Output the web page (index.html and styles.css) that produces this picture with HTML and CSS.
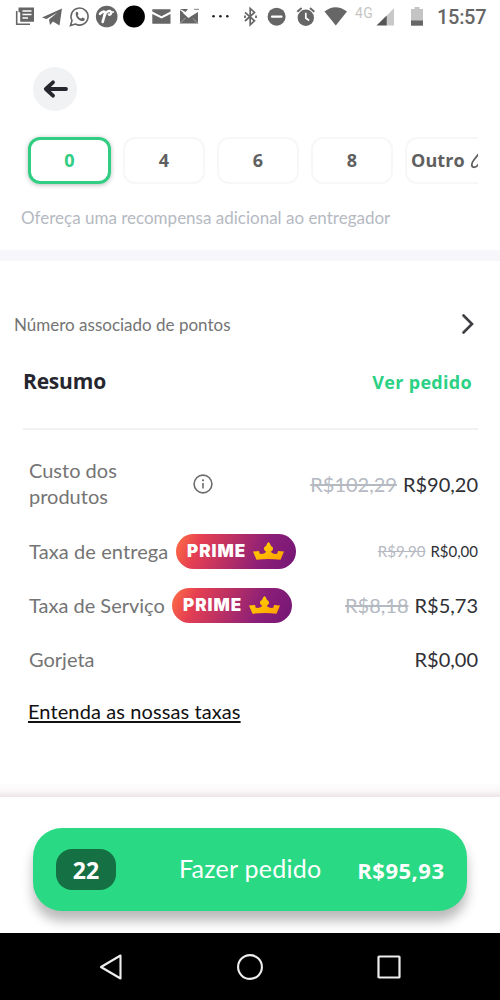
FILE: index.html
```html
<!DOCTYPE html>
<html lang="pt-BR">
<head>
<meta charset="utf-8">
<title>Resumo do pedido</title>
<link rel="stylesheet" href="styles.css">
</head>
<body>
<div class="screen">
  <div class="statusbar">
    <svg width="38" height="34" viewBox="0 0 38 34"><path d="M16.700 11v13.200H30" fill="none" stroke="#666" stroke-width="1.600"/><path fill="#666" d="M18.500 7.500H34v14.200H20.200v-9.500h-1.700z"/><path d="M22.500 11h9M22.500 14.500h9M22.500 18h5.500" stroke="#fff" stroke-width="1.500"/></svg>
    <svg width="28" height="34" viewBox="38 0 28 34"><path fill="#666" d="M42 17.500 62 8.500 59.500 25.500 53 21.500 50 25 49 19.500 57.500 12.500 46.500 19z"/></svg>
    <svg width="26" height="34" viewBox="66 0 26 34"><path d="M70.500 25.500l1.500-5a8.500 8.500 0 1 1 3.400 3.500z" fill="none" stroke="#666" stroke-width="1.600"/><path d="M76 12.200c.8-.8 1.500-.5 1.900.4l.6 1.500-.8 1.300c.8 1.600 1.800 2.500 3.500 3.200l1.200-1.200 2.300 1.100c.5 2-1.500 2.800-3.200 2.500-3.600-1-6.700-4.700-5.500-8.800z" fill="#666"/></svg>
    <svg width="28" height="34" viewBox="92 0 28 34"><circle cx="106.700" cy="16.500" r="10.800" fill="#666"/><path d="M100 13.800c2-2.300 4.500-3 5-1.300.3 1.500-1.500 5.500-2.300 9.500" fill="none" stroke="#fff" stroke-width="2.600" stroke-linecap="round"/><path d="M104.500 15.500c1.500-4 4.500-5.300 6.300-3.800 1.200 1.200-.2 3.500-2 2.800" fill="none" stroke="#fff" stroke-width="2.400" stroke-linecap="round"/><circle cx="113" cy="12" r="1" fill="#fff"/></svg>
    <svg width="28" height="34" viewBox="120 0 28 34"><circle cx="134" cy="16.500" r="10.900" fill="#000"/></svg>
    <svg width="27" height="34" viewBox="148 0 27 34"><path fill="#666" d="M152.300 9.200h18.200v2.300l-9 4.700-9.200-4.700zM152.300 14l9.200 4.500 9-4.500v9.700h-18.200z"/></svg>
    <svg width="30" height="34" viewBox="175 0 30 34"><path fill="#666" d="M180 10l9 7.500L198 12v11.500h-18zM180 9h8l-2.500 3z"/><path d="M184 12.500l4.500 4L197.500 9" fill="none" stroke="#fff" stroke-width="2.200"/><path d="M180 23.500l5.500-5.500M198 23.500l-5-5" stroke="#aaa"/><path d="M194 9.300h5" stroke="#888"/></svg>
    <svg width="30" height="34" viewBox="205 0 30 34"><g fill="#222"><circle cx="213.500" cy="16.200" r="1.300"/><circle cx="220.400" cy="16.200" r="1.300"/><circle cx="227.300" cy="16.200" r="1.300"/></g></svg>
    <svg width="27" height="34" viewBox="235 0 27 34"><path d="M245 12.300l9.500 8.500-4.300 4V8.500l4.300 4-9.500 8.500" fill="none" stroke="#666" stroke-width="1.700"/><path d="M245 15.500v2.400M256 15.500v2.400" stroke="#666" stroke-width="1.800"/></svg>
    <svg width="29" height="34" viewBox="262 0 29 34"><circle cx="276.600" cy="16.700" r="9" fill="#666"/><path d="M272 16.700h9.500" stroke="#fff" stroke-width="2.200" stroke-linecap="round"/></svg>
    <svg width="29" height="34" viewBox="291 0 29 34"><circle cx="305.800" cy="17.700" r="8.200" fill="#666"/><path d="M305.800 12.800v5.200l3.300 2.500" fill="none" stroke="#fff" stroke-width="1.700"/><path d="M297.300 11.700l4.300-3.700M314.300 11.700L310 8" stroke="#666" stroke-width="1.900"/></svg>
    <svg width="35" height="34" viewBox="320 0 35 34"><path fill="#666" d="M324.500 11.500q11-8.500 22.500 0L335.800 25.500z"/></svg>
    <span class="network">4G</span>
    <svg width="25" height="34" viewBox="375 0 25 34"><path fill="#c8c8c8" d="M386 16.500L394 8v17.500h-8z"/><path fill="#555" d="M376.500 25.500L386.700 15.500v10z"/></svg>
    <svg width="37" height="34" viewBox="400 0 37 34"><path fill="#c4c4c4" d="M411 9h3.500V7h5v2h3.500v12H411z"/><path fill="#666" d="M411 20.500h12v5.200H411z"/></svg>
    <span class="clock">15:57</span>
  </div>

  <button class="back" aria-label="Voltar"><svg width="44" height="44" viewBox="0 0 44 44"><path d="M33 22H13M20 15.300L12.800 22l7.200 6.700" fill="none" stroke="#26262e" stroke-width="3.800" stroke-linecap="round" stroke-linejoin="round"/></svg></button>

  <div class="tips">
    <span class="tip selected">0</span>
    <span class="tip">4</span>
    <span class="tip">6</span>
    <span class="tip">8</span>
    <span class="tip other">Outro <svg width="20" height="22" viewBox="0 0 20 22"><path d="M11 2L3.500 11.500C1 14.500 1.500 18 3.500 18.200c2 .2 3.300-.7 4-1.700L17 5" fill="none" stroke="#606060" stroke-width="1.800" stroke-linejoin="round"/></svg></span>
  </div>
  <p class="hint">Ofereça uma recompensa adicional ao entregador</p>
  <div class="band"></div>

  <div class="points"><span>Número associado de pontos</span><svg width="14" height="22" viewBox="0 0 14 22"><path d="M2.500 2.500L11 11l-8.500 8.500" fill="none" stroke="#3d3d42" stroke-width="2.600" stroke-linecap="round"/></svg></div>

  <div class="heading"><h2>Resumo</h2><a class="view">Ver pedido</a></div>

  <div class="costs">
    <div class="row cost"><span class="label products">Custo dos<br>produtos</span><svg class="info" width="20" height="20" viewBox="0 0 20 20"><circle cx="10" cy="10" r="8.900" fill="none" stroke="#6c6c6c" stroke-width="1.600"/><path d="M10 9v5.500" stroke="#6c6c6c" stroke-width="1.600"/><circle cx="10" cy="6.300" r="1.100" fill="#6c6c6c"/></svg><span class="price"><s>R$102,29</s><b>R$90,20</b></span></div>
    <div class="row"><span class="label delivery">Taxa de entrega</span><span class="prime"><span>PRIME</span><svg width="31" height="18" viewBox="0 0 31 18"><defs><linearGradient id="gold" x1="0" x2="1" y2="1"><stop stop-color="#ffdc00"/><stop offset="1" stop-color="#ff9d00"/></linearGradient></defs><path fill="url(#gold)" d="M0 9.500L6 9l.7 2.800c2.500.5 6-.2 6.500-2.300-3.200-1.500-2.700-4.500-.2-5.500Q14 1 15.500 0 17 1 18 4c2.500 1 3 4-.2 5.500.5 2.100 4 2.800 6.500 2.300L25 9l6 .5-3.500 8.300q-12-1.600-24 0z"/></svg></span><span class="price small"><s>R$9,90</s><b>R$0,00</b></span></div>
    <div class="row"><span class="label service">Taxa de Serviço</span><span class="prime"><span>PRIME</span><svg width="31" height="18" viewBox="0 0 31 18"><path fill="url(#gold)" d="M0 9.500L6 9l.7 2.800c2.500.5 6-.2 6.500-2.300-3.200-1.500-2.700-4.500-.2-5.500Q14 1 15.500 0 17 1 18 4c2.500 1 3 4-.2 5.500.5 2.100 4 2.800 6.500 2.300L25 9l6 .5-3.500 8.300q-12-1.600-24 0z"/></svg></span><span class="price"><s>R$8,18</s><b>R$5,73</b></span></div>
    <div class="row"><span class="label">Gorjeta</span><span class="price"><b>R$0,00</b></span></div>
  </div>
  <a class="fees">Entenda as nossas taxas</a>

  <div class="fade"></div>
  <div class="footer">
    <div class="order"><span class="count">22</span><span class="action">Fazer pedido</span><strong class="total">R$95,93</strong></div>
  </div>
  <div class="navbar">
    <svg width="26" height="28" viewBox="0 0 26 28"><path d="M22.500 2.500v23L3 14z" fill="none" stroke="#eee" stroke-width="2.100" stroke-linejoin="round"/></svg>
    <svg width="28" height="28" viewBox="0 0 28 28"><circle cx="14" cy="14" r="11.900" fill="none" stroke="#eee" stroke-width="2.100"/></svg>
    <svg width="26" height="28" viewBox="0 0 26 28"><rect x="2.500" y="3.500" width="21" height="21" rx=".6" fill="none" stroke="#eee" stroke-width="2.200"/></svg>
  </div>
</div>
</body>
</html>
```
FILE: styles.css
```css
* { box-sizing: border-box; }
body { margin: 0; background: #fff; font-family: Lato, "Noto Sans", sans-serif; color: #747474; }
svg { display: block; flex: none; }
p, h2 { margin: 0; }
.screen { width: 500px; height: 1000px; overflow: hidden; display: flex; flex-direction: column; }
.screen > * { flex: none; }
.statusbar { height: 34px; display: flex; }
.network { width: 20px; font: 14px/27px Roboto, sans-serif; letter-spacing: .5px; color: #c6c6c6; white-space: nowrap; }
.clock { font: 500 20px/35px Roboto, sans-serif; letter-spacing: -.3px; color: #666; }
.back { margin: 33px 0 0 33px; width: 44px; height: 44px; padding: 0; border: 0; border-radius: 50%; background: #f0f2f4; }
.tips { width: 478px; height: 72px; margin-top: 14px; padding: 12px 0 12px 28px; display: flex; gap: 12px; overflow: hidden; }
.tip { flex: none; width: 82px; height: 47px; border: 2px solid #f7f7f8; border-radius: 12px; padding-bottom: 2px; display: flex; align-items: center; justify-content: center; font: 700 18px "Open Sans", sans-serif; color: #606060; white-space: nowrap; }
.tip.selected { width: 83px; border: 3px solid #30cd82; color: #30cd82; box-shadow: 0 1px 5px #bbb; }
.tip.other { width: 110px; justify-content: flex-start; padding-left: 4px; gap: 5px; letter-spacing: .1px; }
.hint { margin: 9px 0 0 21px; font-size: 17px; line-height: 24px; color: #b5b9c2; height: 44px; }
.band { height: 11px; background: #f7f7fb; }
.points { margin-top: 51px; height: 24px; padding: 0 25px 0 14px; display: flex; align-items: center; justify-content: space-between; font-size: 17px; }
.heading { margin: 0 22px 0 23px; height: 94px; padding: 30px 6px 0 0; border-bottom: 2px solid #f1f1f2; display: flex; justify-content: space-between; }
.heading h2 { font: 700 21px/31px "Open Sans", sans-serif; letter-spacing: -.2px; color: #26262e; }
.view { font: 700 18px/32px "Open Sans", sans-serif; letter-spacing: .3px; color: #2bd184; }
.costs { padding: 27px 22px 0 29px; }
.row { height: 54px; display: flex; align-items: center; font-size: 20px; }
.row.cost { height: 67px; align-items: flex-start; }
.label { line-height: 26px; white-space: nowrap; }
.products { width: 164px; }
.info { margin-top: 17px; }
.delivery { width: 147px; letter-spacing: .1px; }
.service { width: 143px; }
.price { margin-left: auto; white-space: nowrap; color: #b5b9c2; display: flex; gap: 6px; line-height: 26px; }
.cost .price { margin-top: 14px; }
.price b { font-weight: 400; color: #303036; }
.small { font-size: 15px; gap: 5px; }
.prime { width: 120px; height: 35px; border-radius: 18px; display: flex; align-items: center; padding-left: 11px; gap: 6px; background: linear-gradient(112deg, #ff7043 0, #e53f52 20%, #8b1f78 72%, #751675); color: #fff; }
.prime > span { font: 900 17px/20px Inter, sans-serif; letter-spacing: 1px; width: 60px; }
.fees { margin: 12px 0 0 28px; font-size: 20px; line-height: 26px; letter-spacing: .1px; color: #111; text-decoration: underline; text-underline-offset: 2px; text-decoration-thickness: 1.500px; }
.fade { margin-top: auto; height: 13px; background: linear-gradient(#fdfdfd, #fbf7f8 50%, #ebe5e7); }
.footer { height: 136px; padding: 31px 33px 0; overflow: hidden; }
.order { height: 83px; width: 434px; border-radius: 29px; background: #2ad984; box-shadow: 0 10px 12px #bbb; display: flex; align-items: center; padding: 0 23px; color: #fff; }
.count { width: 60px; height: 41px; border-radius: 16px; background: #157043; display: flex; align-items: center; justify-content: center; font: 700 23px "Open Sans", sans-serif; }
.action { margin: -3px auto 0 63px; font-size: 25px; letter-spacing: .25px; }
.total { font: 700 22px "Open Sans", sans-serif; letter-spacing: .5px; margin-right: -.5px; }
.navbar { height: 67px; background: #000; display: flex; align-items: center; justify-content: space-between; padding: 0 98px; }
```
